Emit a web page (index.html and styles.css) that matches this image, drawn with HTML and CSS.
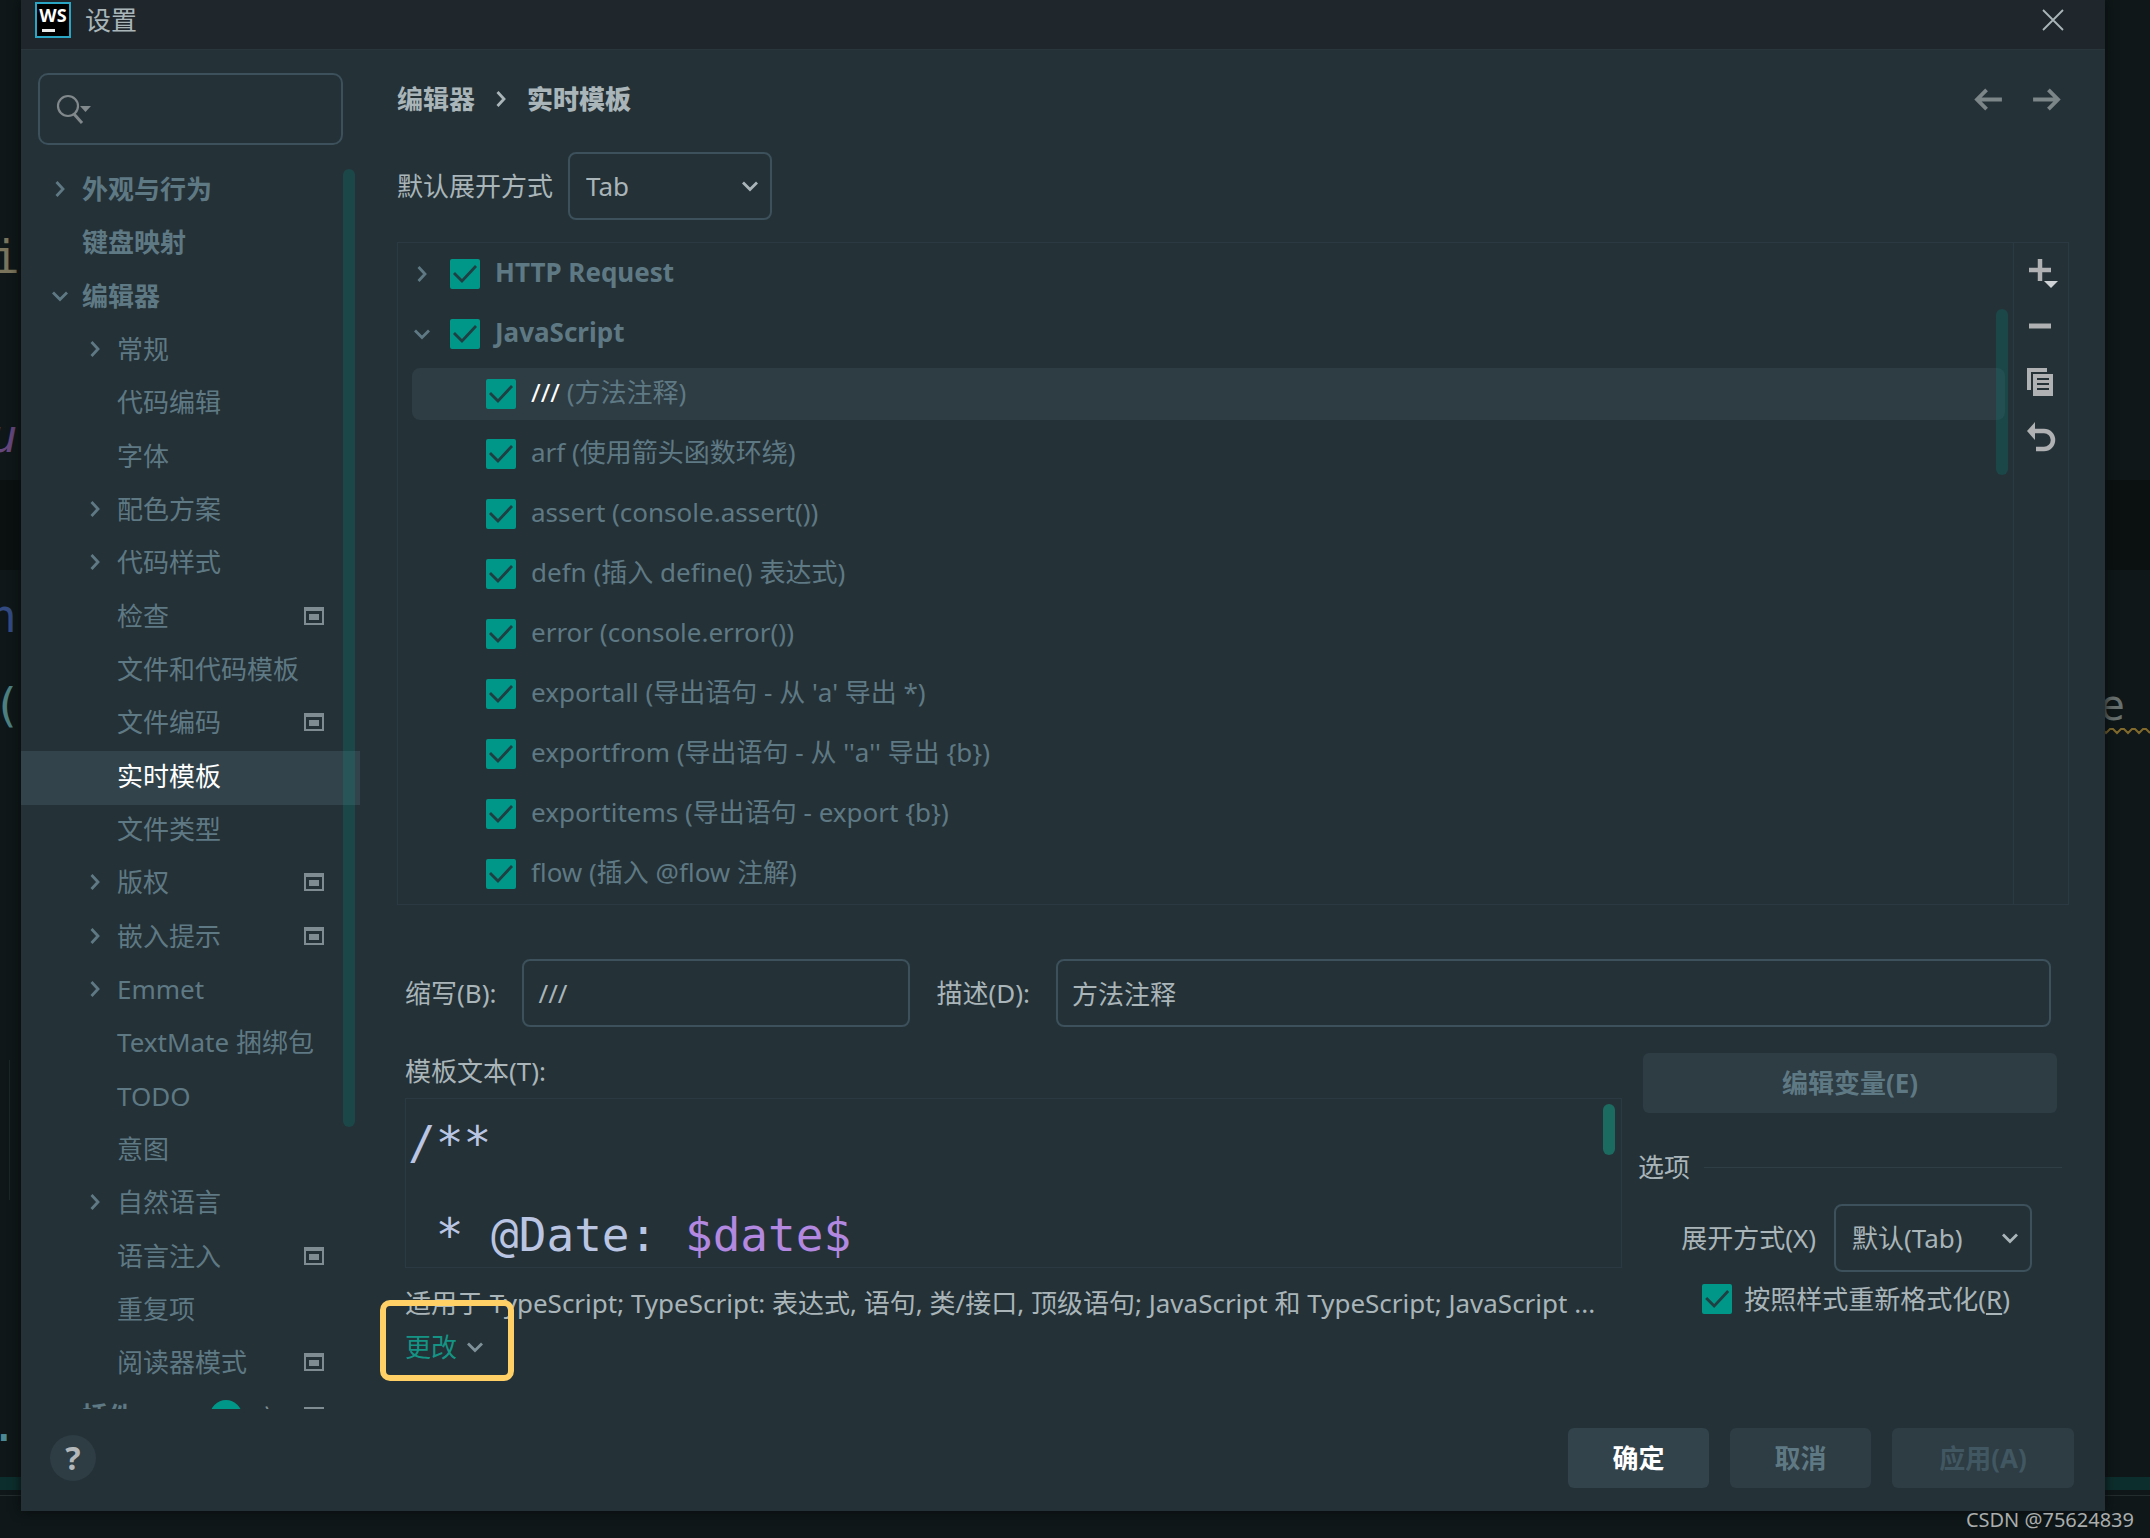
FILE: index.html
```html
<!DOCTYPE html>
<html lang="zh-CN">
<head>
<meta charset="utf-8">
<meta name="viewport" content="width=device-width, initial-scale=1">
<title>设置</title>
<link rel="stylesheet" href="styles.css">
</head>
<body>
<svg class="sprite" aria-hidden="true">
  <symbol id="i-right" viewBox="0 0 20 20"><path d="M6.500 3l6.500 7-6.500 7" fill="none" stroke="currentColor" stroke-width="2.800"/></symbol>
  <symbol id="i-down" viewBox="0 0 20 20"><path d="M3 6.500l7 7 7-7" fill="none" stroke="currentColor" stroke-width="2.800"/></symbol>
  <symbol id="i-project" viewBox="0 0 20 18"><path fill="currentColor" fill-rule="evenodd" d="M0 0h20v18H0zM2 4v12h16v-12z"/><path fill="currentColor" d="M5 7h10v6H5z"/></symbol>
</svg>

<div class="backdrop" aria-hidden="true">
  <div class="caret-line"></div>
  <span class="code code-i">i</span>
  <span class="code code-u">u</span>
  <span class="code code-n">n</span>
  <span class="code code-paren">(</span>
  <span class="code code-dot">.</span>
  <span class="code code-e">e</span>
  <svg class="wave" viewBox="0 0 48 8"><path d="M0 2l4 4 4-4h3l4 4 4-4h3l4 4 4-4h3l4 4 4-4h3l4 4" fill="none" stroke="#826a2c" stroke-width="2"/></svg>
  <div class="guide"></div>
  <div class="progress"></div>
</div>

<main class="dialog">
  <header class="titlebar">
    <svg class="logo" viewBox="0 0 36 36" role="img" aria-label="WebStorm"><rect x="1" y="1" width="34" height="34" fill="#000" stroke="#2aa5c4" stroke-width="2"/><text x="18" y="20" text-anchor="middle" class="logo-text">WS</text><path d="M7 27h13v3H7z" fill="#e8eaea"/></svg>
    <h1 class="title">设置</h1>
    <button class="close" aria-label="关闭"><svg viewBox="0 0 24 24"><path d="M2 2l20 20M22 2L2 22" fill="none" stroke="currentColor" stroke-width="1.800"/></svg></button>
  </header>

  <div class="body">
    <aside class="sidebar">
      <label class="search">
        <svg viewBox="0 0 36 36"><circle cx="12" cy="15" r="10" fill="none" stroke="currentColor" stroke-width="2.200"/><path d="M18 23l8 9" stroke="currentColor" stroke-width="3"/><path d="M24 15h11l-5.500 6z" fill="currentColor"/></svg>
        <input type="search" aria-label="搜索">
      </label>
      <nav class="tree-wrap">
        <ul class="tree">
          <li class="top"><svg><use href="#i-right"/></svg><a href="#">外观与行为</a></li>
          <li class="top"><i></i><a href="#">键盘映射</a></li>
          <li class="top"><svg><use href="#i-down"/></svg><a href="#">编辑器</a></li>
          <li><svg><use href="#i-right"/></svg><a href="#">常规</a></li>
          <li><i></i><a href="#">代码编辑</a></li>
          <li><i></i><a href="#">字体</a></li>
          <li><svg><use href="#i-right"/></svg><a href="#">配色方案</a></li>
          <li><svg><use href="#i-right"/></svg><a href="#">代码样式</a></li>
          <li><i></i><a href="#">检查</a><svg class="mark"><use href="#i-project"/></svg></li>
          <li><i></i><a href="#">文件和代码模板</a></li>
          <li><i></i><a href="#">文件编码</a><svg class="mark"><use href="#i-project"/></svg></li>
          <li class="selected"><i></i><a href="#" aria-current="page">实时模板</a></li>
          <li><i></i><a href="#">文件类型</a></li>
          <li><svg><use href="#i-right"/></svg><a href="#">版权</a><svg class="mark"><use href="#i-project"/></svg></li>
          <li><svg><use href="#i-right"/></svg><a href="#">嵌入提示</a><svg class="mark"><use href="#i-project"/></svg></li>
          <li><svg><use href="#i-right"/></svg><a href="#">Emmet</a></li>
          <li><i></i><a href="#">TextMate 捆绑包</a></li>
          <li><i></i><a href="#">TODO</a></li>
          <li><i></i><a href="#">意图</a></li>
          <li><svg><use href="#i-right"/></svg><a href="#">自然语言</a></li>
          <li><i></i><a href="#">语言注入</a><svg class="mark"><use href="#i-project"/></svg></li>
          <li><i></i><a href="#">重复项</a></li>
          <li><i></i><a href="#">阅读器模式</a><svg class="mark"><use href="#i-project"/></svg></li>
          <li class="top"><i></i><a href="#">插件</a><span class="count">1</span><span class="lang">文</span><svg class="mark"><use href="#i-project"/></svg></li>
        </ul>
        <div class="scrollbar tree-bar"></div>
      </nav>
    </aside>

    <section class="content">
      <div class="crumbs">
        <a href="#">编辑器</a><svg><use href="#i-right"/></svg><strong>实时模板</strong>
        <div class="history">
          <button aria-label="后退"><svg viewBox="0 0 30 24"><path d="M29 12H3M13 2L3 12l10 10" fill="none" stroke="currentColor" stroke-width="4"/></svg></button>
          <button aria-label="前进"><svg viewBox="0 0 30 24"><path d="M1 12h26M17 2l10 10-10 10" fill="none" stroke="currentColor" stroke-width="4"/></svg></button>
        </div>
      </div>

      <div class="expand-row">
        <label for="expand">默认展开方式</label>
        <div class="select"><select id="expand"><option>Tab</option></select><svg><use href="#i-down"/></svg></div>
      </div>

      <div class="templates">
        <div class="list-wrap">
          <ul class="list">
            <li class="group"><svg><use href="#i-right"/></svg><label><input type="checkbox" checked><span>HTTP Request</span></label></li>
            <li class="group"><svg><use href="#i-down"/></svg><label><input type="checkbox" checked><span>JavaScript</span></label></li>
            <li class="active"><label><input type="checkbox" checked><span><b>///</b> (方法注释)</span></label></li>
            <li><label><input type="checkbox" checked><span>arf (使用箭头函数环绕)</span></label></li>
            <li><label><input type="checkbox" checked><span>assert (console.assert())</span></label></li>
            <li><label><input type="checkbox" checked><span>defn (插入 define() 表达式)</span></label></li>
            <li><label><input type="checkbox" checked><span>error (console.error())</span></label></li>
            <li><label><input type="checkbox" checked><span>exportall (导出语句 - 从 'a' 导出 *)</span></label></li>
            <li><label><input type="checkbox" checked><span>exportfrom (导出语句 - 从 ''a'' 导出 {b})</span></label></li>
            <li><label><input type="checkbox" checked><span>exportitems (导出语句 - export {b})</span></label></li>
            <li><label><input type="checkbox" checked><span>flow (插入 @flow 注解)</span></label></li>
          </ul>
          <div class="scrollbar list-bar"></div>
        </div>
        <div class="tools">
          <button aria-label="添加"><svg viewBox="0 0 32 32"><path d="M3 13h22M14 2v22" stroke="currentColor" stroke-width="4.500"/><path d="M18 24h14l-7 7z" fill="#d0d3d5"/></svg></button>
          <button aria-label="移除"><svg viewBox="0 0 32 32"><path d="M3 14h22" stroke="currentColor" stroke-width="5"/></svg></button>
          <button aria-label="复制"><svg viewBox="0 0 32 32"><path d="M1 1h20v4H5v18H1z" fill="currentColor"/><path fill="currentColor" fill-rule="evenodd" d="M7 7h20v22H7zM11 11v2h12v-2zM11 16v2h12v-2zM11 21v2h12v-2z"/></svg></button>
          <button aria-label="还原"><svg viewBox="0 0 32 32"><path d="M8 9h10a9 9 0 0 1 0 18h-8" fill="none" stroke="currentColor" stroke-width="4.500"/><path d="M9 0v18L1 9z" fill="currentColor"/></svg></button>
        </div>
      </div>

      <div class="fields">
        <label for="abbr">缩写(B):</label>
        <input id="abbr" class="field" type="text" value="///">
        <label for="desc">描述(D):</label>
        <input id="desc" class="field" type="text" value="方法注释">
      </div>

      <div class="detail">
        <div class="text-col">
          <div class="caption" id="tpl-label">模板文本(T):</div>
          <div class="editor">
            <div class="source" role="textbox" aria-multiline="true" aria-labelledby="tpl-label" contenteditable="true" spellcheck="false"><div>/**</div><div> * @Date: <span class="var">$date$</span></div></div>
            <div class="scrollbar editor-bar"></div>
          </div>
          <p class="applies">适用于 TypeScript; TypeScript: 表达式, 语句, 类/接口, 顶级语句; JavaScript 和 TypeScript; JavaScript ...</p>
          <button class="change">更改<svg><use href="#i-down"/></svg><span class="highlight"></span></button>
        </div>
        <div class="options">
          <button class="btn vars">编辑变量(E)</button>
          <fieldset>
            <legend>选项</legend>
            <div class="option-row"><label for="mode">展开方式(X)</label>
              <div class="select"><select id="mode"><option>默认(Tab)</option></select><svg><use href="#i-down"/></svg></div></div>
            <label class="option-check"><input type="checkbox" checked><span>按照样式重新格式化(<u>R</u>)</span></label>
          </fieldset>
        </div>
      </div>
    </section>
  </div>

  <footer class="footer">
    <button class="help" aria-label="帮助">?</button>
    <button class="btn ok">确定</button>
    <button class="btn">取消</button>
    <button class="btn apply" disabled>应用(A)</button>
  </footer>
</main>
<div class="watermark">CSDN @75624839</div>
</body>
</html>
```
FILE: styles.css
```css
* { box-sizing: border-box; }

body {
  margin: 0;
  min-height: 100vh;
  display: flex;
  flex-direction: column;
  position: relative;
  background: #0f1718;
  color: #a9b5b9;
  font: 26px/36px "Noto Sans", "Noto Sans CJK SC", sans-serif;
}

button, input, select { font: inherit; color: inherit; }
button { border: 0; padding: 0; background: none; cursor: pointer; }
ul { list-style: none; margin: 0; padding: 0; }
a { color: inherit; text-decoration: none; }
svg { display: block; width: 20px; height: 20px; flex: none; }
.sprite { position: absolute; width: 0; height: 0; }

/* Editor window visible behind the dialog */
.backdrop { position: absolute; inset: 0; overflow: hidden; font: 46px/54px "DejaVu Sans Mono", monospace; }
.caret-line { position: absolute; left: 0; right: 0; top: 480px; height: 90px; background: #0a1110; }
.code { position: absolute; }
.code-i { left: -8px; top: 230px; color: #79745b; }
.code-u { left: -10px; top: 409px; color: #64467c; font-style: italic; }
.code-n { left: -11px; top: 589px; color: #324a80; }
.code-paren { left: -7px; top: 678px; color: #4b7f80; }
.code-dot { left: -10px; top: 1398px; color: #4b8a94; }
.code-e { right: 25px; top: 679px; color: #67706f; font-size: 42px; }
.wave { position: absolute; right: 0; top: 727px; width: 48px; height: 8px; }
.guide { position: absolute; left: 9px; top: 1060px; width: 1px; height: 140px; background: #1c2627; }
.progress { position: absolute; left: 0; right: 0; top: 1477px; height: 19px; border-top: 13px solid #0c2f2d; border-bottom: 1px solid #242d2e; }

.dialog {
  position: relative;
  flex: 1;
  display: flex;
  flex-direction: column;
  margin: 0 45px 27px 21px;
  background: #243137;
  box-shadow: 0 0 10px #080c0d;
}

.titlebar {
  display: flex;
  align-items: center;
  height: 50px;
  padding: 0 40px 10px 14px;
  background: #1f272c;
  border-bottom: 1px solid #29363c;
}
.logo { width: 36px; height: 36px; }
.logo-text { font: bold 18px "Open Sans", sans-serif; fill: #fff; }
.title { margin: 0 auto 0 14px; font-size: 26px; font-weight: 400; }
.close svg { width: 24px; height: 24px; }

.body { flex: 1; display: flex; }

.sidebar { width: 339px; flex: none; display: flex; flex-direction: column; color: #5f7984; }
.search {
  display: flex;
  align-items: center;
  height: 72px;
  margin: 23px 17px 20px;
  padding-left: 16px;
  border: 2px solid #3c515b;
  border-radius: 10px;
  color: #82898c;
}
.search svg { width: 36px; height: 36px; }
.search input { flex: 1; min-width: 0; background: none; border: 0; outline: 0; }

.tree-wrap { position: relative; flex: 1 1 0; min-height: 0; height: 0; overflow: hidden; }
.tree li { display: flex; align-items: center; gap: 12px; height: 53px; padding: 0 36px 5px 64px; }
.tree li:nth-child(3n) { height: 54px; }
.tree li.top { padding-left: 29px; font-weight: 700; }
.tree i { width: 20px; }
.tree a { white-space: nowrap; }
.tree .selected { background: #32434b; color: #fff; }
.tree .mark { width: 20px; height: 18px; margin-left: auto; color: #7f8d92; }
.count { width: 32px; height: 32px; margin-left: auto; border-radius: 50%; background: #009688; color: #fff; font-size: 18px; line-height: 32px; text-align: center; }
.lang { color: #7f8d92; font-size: 22px; font-weight: 400; margin-left: 2px; }
.tree .lang + .mark { margin-left: 14px; }

.scrollbar { position: absolute; width: 12px; border-radius: 6px; background: #00968838; }
.tree-bar { right: 5px; top: 4px; height: 958px; }
.list-bar { right: 5px; top: 66px; height: 166px; }
.editor-bar { right: 6px; top: 5px; height: 51px; background: #1c6b61; }

.content { flex: 1; min-width: 0; padding: 31px 36px 0 37px; }

.crumbs { display: flex; align-items: center; height: 36px; font-weight: 700; gap: 17px; }
.crumbs svg { width: 20px; }
.crumbs > svg { margin: 0 -1px; }
.history { display: flex; gap: 29px; margin-left: auto; margin-right: 8px; color: #7c8588; }
.history svg { width: 29px; height: 23px; }

.expand-row { display: flex; align-items: center; gap: 15px; margin: 35px 0 22px; }

.select { display: grid; align-items: center; }
.select select {
  grid-area: 1 / 1;
  appearance: none;
  width: 204px;
  height: 68px;
  padding: 0 44px 0 16px;
  background: none;
  border: 2px solid #3c515b;
  border-radius: 8px;
}
.select svg { grid-area: 1 / 1; justify-self: end; margin-right: 12px; pointer-events: none; }

.templates { display: flex; border: 1px solid #2b3a42; }
.list-wrap { position: relative; flex: 1; min-width: 0; padding: 1px 8px 0 0; color: #5f7984; }
.list li { display: flex; align-items: center; gap: 18px; height: 60px; padding-left: 88px; }
.list .group { padding-left: 14px; font-weight: 700; }
.list label { display: flex; align-items: center; gap: 15px; }
.list span { padding-bottom: 4px; white-space: nowrap; }
.list b { color: #fff; font-weight: 400; }
.list .active { height: 52px; margin: 4px 0 4px 14px; padding-left: 74px; border-radius: 8px; background: #2e3c43; }
.tools { display: flex; flex-direction: column; gap: 23px; width: 55px; padding: 14px 0 0 12px; border-left: 1px solid #2b3a42; color: #afb1b3; }
.tools svg { width: 32px; height: 32px; }

input[type="checkbox"] {
  appearance: none;
  width: 30px;
  height: 30px;
  margin: 0;
  flex: none;
  border-radius: 2px;
  background: #009688;
}
input[type="checkbox"]:checked::after {
  content: "";
  display: block;
  width: 30px;
  height: 30px;
  background: #1f3f43;
  clip-path: polygon(3px 15px, 5px 13px, 12px 20px, 25px 6px, 27px 8px, 12px 24px);
}

.fields { display: flex; align-items: center; gap: 26px; margin: 54px 18px 0 8px; }
.field { height: 68px; padding: 0 14px; background: none; border: 2px solid #3c515b; border-radius: 8px; }
.fields #abbr { width: 388px; }
.fields #desc { flex: 1; min-width: 0; }

.detail { display: flex; gap: 16px; padding: 26px 7px 0 8px; }
.text-col { flex: 1; min-width: 0; }
.caption { height: 45px; }
.editor { position: relative; height: 170px; overflow: hidden; border: 1px solid #2b3a42; }
.source { margin-top: -2px; padding-left: 2px; font: 46px/92px "DejaVu Sans Mono", monospace; color: #bac5e3; white-space: pre; outline: 0; }
.var { color: #b388e0; }
.applies { margin: 17px 0 8px; overflow: hidden; text-overflow: ellipsis; white-space: nowrap; }
.change { position: relative; display: flex; align-items: center; gap: 8px; color: #149485; }
.change svg { width: 20px; color: #7f9199; }
.highlight { position: absolute; left: -25px; top: -29px; width: 134px; height: 81px; border: 6px solid #fed066; border-radius: 10px; }

.btn { height: 60px; min-width: 141px; border-radius: 6px; background: #2e3c43; color: #5f7984; font-weight: 700; }
.options { width: 424px; }
.vars { display: block; width: 414px; margin: 0 0 0 5px; }
fieldset { min-width: 0; margin: 36px 0 0; padding: 0; border: 0; }
legend { display: flex; align-items: center; gap: 14px; width: 100%; padding: 0; }
legend::after { content: ""; flex: 1; height: 1px; background: #2f3d44; }
.option-row { display: flex; align-items: center; justify-content: flex-end; gap: 18px; margin: 19px 30px 9px 0; }
.option-row .select select { width: 198px; }
.option-check { display: flex; align-items: center; justify-content: flex-end; gap: 12px; margin-right: 52px; }
u { text-underline-offset: 4px; text-decoration-thickness: 2px; }

.footer { display: flex; align-items: center; gap: 21px; padding: 19px 31px 23px 29px; }
.help { width: 46px; height: 46px; margin-right: auto; border-radius: 50%; background: #2e3c43; color: #b3b8ba; font-size: 32px; font-weight: 700; line-height: 46px; }
.ok { background: #32434b; color: #fff; }
.apply { min-width: 182px; color: #415761; }

.watermark { position: absolute; right: 16px; bottom: 4px; color: #a9adad; font-size: 20px; line-height: 28px; }
```
